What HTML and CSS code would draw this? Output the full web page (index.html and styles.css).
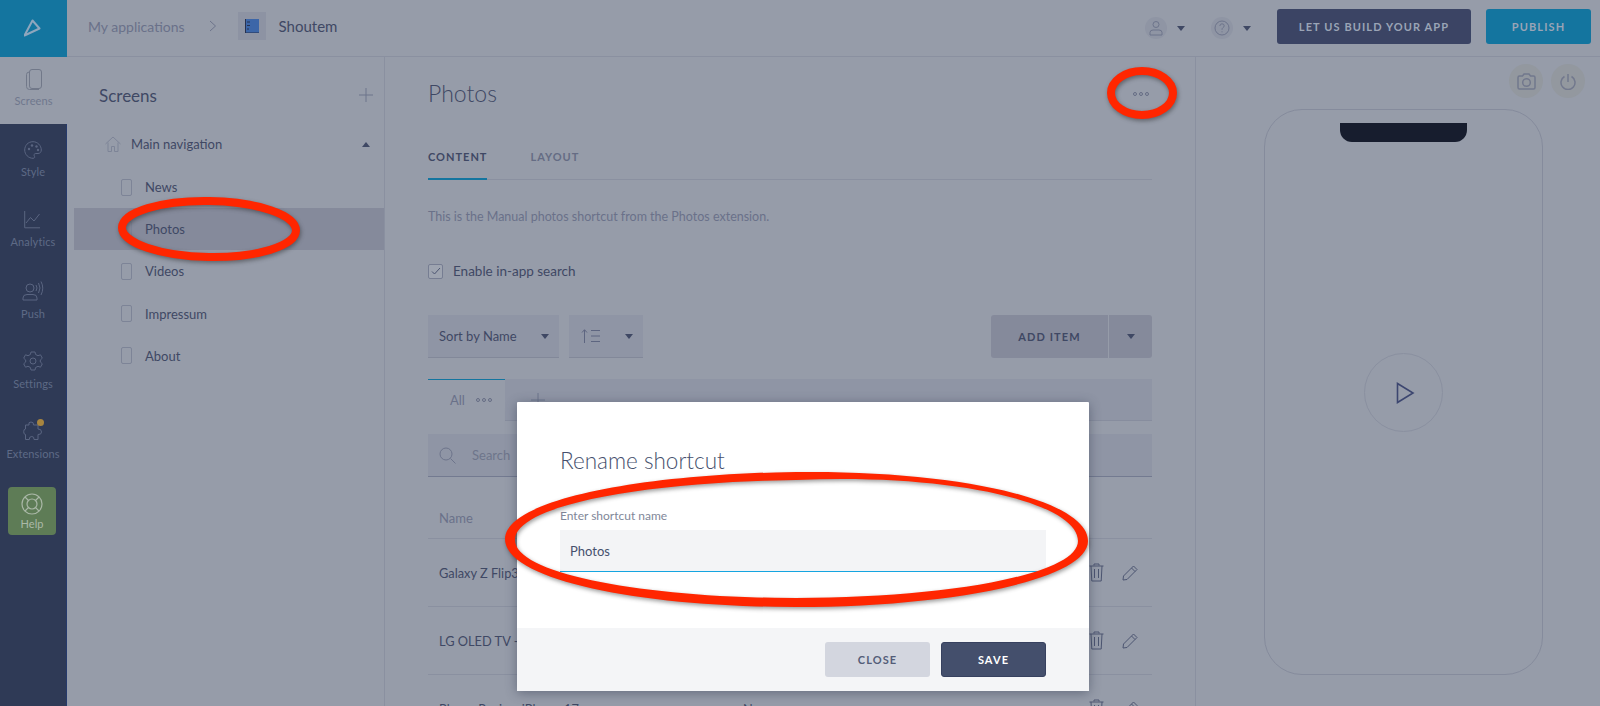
FILE: index.html
```html
<!DOCTYPE html>
<html lang="en">
<head>
  <meta charset="UTF-8">
  <title>Shoutem - Rename shortcut</title>
  <link rel="stylesheet" href="styles.css">
</head>
<body>
  <header class="topbar">
    <div class="logo">
      <svg width="20" height="20" viewBox="0 0 20 20"><path d="M8.500 1.500 L15.500 9.500 L0.500 16.500 Z" class="line-logo"/></svg>
    </div>
    <div class="crumb">My applications</div>
    <svg class="crumb-arrow" width="8" height="12" viewBox="0 0 8 12"><path d="M1 1 L6.500 6 L1 11" class="line-soft"/></svg>
    <div class="app-icon">
      <svg width="14" height="14" viewBox="0 0 14 14"><rect x="0" y="0" width="14" height="14" class="app-square"/><path d="M.5 0 V14 H14 M2 3 H5 M2 6.500 H5 M2 10 H4" class="app-ink"/></svg>
    </div>
    <div class="app-name">Shoutem</div>
    <div class="top-right">
      <div class="round-icon">
        <svg width="16" height="16" viewBox="0 0 16 16"><circle cx="8" cy="4.500" r="3" class="line-soft"/><path d="M2 15 V12.500 Q2 10 5 10 H11 Q14 10 14 12.500 V15 Z" class="line-soft"/></svg>
      </div>
      <span class="caret caret-user"></span>
      <div class="round-icon">
        <svg width="16" height="16" viewBox="0 0 16 16"><circle cx="8" cy="8" r="7" class="line-soft"/><path d="M5.800 6 Q6 3.800 8 3.800 Q10.200 3.800 10.200 5.800 Q10.200 7 8.800 7.800 Q8 8.300 8 9.800 M8 11.300 V12.300" class="line-soft"/></svg>
      </div>
      <span class="caret caret-help"></span>
      <button class="top-btn build-btn">LET US BUILD YOUR APP</button>
      <button class="top-btn publish-btn">PUBLISH</button>
    </div>
  </header>

  <div class="workspace">
    <nav class="rail">
      <div class="rail-item active">
        <svg width="16" height="22" viewBox="0 0 16 22"><rect x="3.500" y="0.500" width="12" height="19" rx="2.500" class="line-rail-dark"/><path d="M3.500 3 Q0.500 3 0.500 5.500 V17.500 Q0.500 20.500 3.500 20.500 H13" class="line-rail-dark"/></svg>
        <span>Screens</span>
      </div>
      <div class="rail-item">
        <svg width="18" height="18" viewBox="0 0 18 18"><path d="M9 .7 C4 .7 .7 4.500 .7 9 C.7 13.500 4.500 17.300 9 17.300 C11 17.300 11 15.800 10.300 15 C9.500 13.800 10.300 12.500 11.800 12.500 H14 C16 12.500 17.300 11 17.300 9 C17.300 4.500 13.500 .7 9 .7 Z" class="line-rail"/><circle cx="5" cy="8" r="1.200" class="dot-rail"/><circle cx="8" cy="4.500" r="1.200" class="dot-rail"/><circle cx="12.500" cy="5.500" r="1.200" class="dot-rail"/><circle cx="14" cy="9" r="1.200" class="dot-rail"/></svg>
        <span>Style</span>
      </div>
      <div class="rail-item">
        <svg width="18" height="18" viewBox="0 0 18 18"><path d="M.7 0 V16.800 H16 M2 12 L6.500 6.500 L10 10 L15.500 3" class="line-rail"/></svg>
        <span>Analytics</span>
      </div>
      <div class="rail-item">
        <svg width="22" height="20" viewBox="0 0 22 20"><circle cx="8" cy="7" r="4" class="line-rail"/><path d="M1 19 V17 Q1 13.500 5 13.500 H11 Q15 13.500 15 17 V19 Z M14 4 Q16 7 14 10 M16.500 2 Q19.500 7 16.500 12 M19 .5 Q22.500 7 19 14" class="line-rail"/></svg>
        <span>Push</span>
      </div>
      <div class="rail-item">
        <svg width="20" height="20" viewBox="0 0 20 20"><path d="M8 1 H12 L12.600 3.500 L15 4.700 L17.500 3.800 L19.300 7.200 L17.300 9 V11 L19.300 12.800 L17.500 16.200 L15 15.300 L12.600 16.500 L12 19 H8 L7.400 16.500 L5 15.300 L2.500 16.200 L.7 12.800 L2.700 11 V9 L.7 7.200 L2.500 3.800 L5 4.700 L7.400 3.500 Z" class="line-rail"/><circle cx="10" cy="10" r="3" class="line-rail"/></svg>
        <span>Settings</span>
      </div>
      <div class="rail-item">
        <span class="rail-dot"></span>
        <svg width="20" height="20" viewBox="0 0 20 20"><path d="M8 1 Q11 1 10.500 4 H15 V8 Q18.500 7.800 18.500 11 Q18.500 13.800 15 13.500 V18.500 H11 Q11.300 15.500 8.800 15.500 Q6 15.500 6.300 18.500 H2.500 V13.500 Q.7 13.500 .7 10.800 Q.7 8 2.500 8 V4 H6 Q5 1 8 1 Z" class="line-rail"/></svg>
        <span>Extensions</span>
      </div>
      <div class="help-box">
        <svg width="22" height="22" viewBox="0 0 22 22"><circle cx="11" cy="11" r="10" class="line-help"/><circle cx="11" cy="11" r="5" class="line-help"/><path d="M4 4 L7.500 7.500 M18 4 L14.500 7.500 M4 18 L7.500 14.500 M18 18 L14.500 14.500" class="line-help"/></svg>
        <span>Help</span>
      </div>
    </nav>

    <aside class="screens">
      <div class="screens-head">
        <h2>Screens</h2>
        <svg width="14" height="14" viewBox="0 0 14 14"><path d="M7 0 V14 M0 7 H14" class="line-soft"/></svg>
      </div>
      <div class="nav-root">
        <svg width="16" height="16" viewBox="0 0 16 16"><path d="M.5 8 L8 1 L15.500 8 M3 6.500 V15.500 H6.500 V10.500 H9.500 V15.500 H13 V6.500" class="line-faint"/></svg>
        <span>Main navigation</span>
        <span class="caret caret-up"></span>
      </div>
      <div class="screen-row"><span class="screen-mark"></span>News</div>
      <div class="screen-row selected"><span class="screen-mark"></span>Photos</div>
      <div class="screen-row"><span class="screen-mark"></span>Videos</div>
      <div class="screen-row"><span class="screen-mark"></span>Impressum</div>
      <div class="screen-row"><span class="screen-mark"></span>About</div>
    </aside>

    <main class="content">
      <div class="content-head">
        <h1>Photos</h1>
        <div class="dots"><i></i><i></i><i></i></div>
      </div>
      <div class="tabs">
        <div class="tab current">CONTENT</div>
        <div class="tab">LAYOUT</div>
      </div>
      <p class="note">This is the Manual photos shortcut from the Photos extension.</p>
      <label class="check-line">
        <span class="check-box">
          <svg width="10" height="8" viewBox="0 0 10 8"><path d="M1 4.500 L3.500 7 L9 1" class="line-dark"/></svg>
        </span>
        Enable in-app search
      </label>
      <div class="toolbar">
        <div class="select sort-name">Sort by Name<span class="caret"></span></div>
        <div class="select sort-dir">
          <svg width="20" height="14" viewBox="0 0 20 14"><path d="M3.500 14 V1 M1 3.500 L3.500 .7 L6 3.500 M10 1.500 H19 M10 7 H19 M10 12.500 H19" class="line-sort"/></svg>
          <span class="caret"></span>
        </div>
        <div class="add-group">
          <div class="add-btn">ADD ITEM</div>
          <div class="add-more"><span class="caret"></span></div>
        </div>
      </div>
      <div class="cat-strip">
        <div class="cat-tab">All<div class="dots small"><i></i><i></i><i></i></div></div>
        <svg class="cat-plus" width="14" height="14" viewBox="0 0 14 14"><path d="M7 0 V14 M0 7 H14" class="line-soft"/></svg>
      </div>
      <div class="search">
        <svg width="17" height="17" viewBox="0 0 17 17"><circle cx="7" cy="7" r="6" class="line-soft"/><path d="M11.500 11.500 L16.500 16.500" class="line-soft"/></svg>
        <span>Search</span>
      </div>
      <div class="table-head">Name</div>
      <div class="table-row">
        <span class="cell-name">Galaxy Z Flip3 Review</span>
        <svg class="trash" width="15" height="19" viewBox="0 0 15 19"><path d="M5 2.500 V1 H10 V2.500 M.5 3 H14.500 M2 3 L2.800 18 H12.200 L13 3 M5.500 6 V15 M9.500 6 V15" class="line-dark"/></svg>
        <svg class="pencil" width="16" height="16" viewBox="0 0 16 16"><path d="M11.500 1 L15 4.500 L5 14.500 L1 15 L1.500 11 Z M9.500 3 L13 6.500" class="line-dark"/></svg>
      </div>
      <div class="table-row">
        <span class="cell-name">LG OLED TV - Tested</span>
        <svg class="trash" width="15" height="19" viewBox="0 0 15 19"><path d="M5 2.500 V1 H10 V2.500 M.5 3 H14.500 M2 3 L2.800 18 H12.200 L13 3 M5.500 6 V15 M9.500 6 V15" class="line-dark"/></svg>
        <svg class="pencil" width="16" height="16" viewBox="0 0 16 16"><path d="M11.500 1 L15 4.500 L5 14.500 L1 15 L1.500 11 Z M9.500 3 L13 6.500" class="line-dark"/></svg>
      </div>
      <div class="table-row">
        <span class="cell-name">Phone Review iPhone 17</span>
        <span class="cell-type">N</span>
        <svg class="trash" width="15" height="19" viewBox="0 0 15 19"><path d="M5 2.500 V1 H10 V2.500 M.5 3 H14.500 M2 3 L2.800 18 H12.200 L13 3 M5.500 6 V15 M9.500 6 V15" class="line-dark"/></svg>
        <svg class="pencil" width="16" height="16" viewBox="0 0 16 16"><path d="M11.500 1 L15 4.500 L5 14.500 L1 15 L1.500 11 Z M9.500 3 L13 6.500" class="line-dark"/></svg>
      </div>
    </main>

    <section class="preview">
      <div class="preview-tools">
        <div class="tool-icon">
          <svg width="19" height="17" viewBox="0 0 19 17"><path d="M1 4.500 Q1 3 2.500 3 H5.500 L7 1 H12 L13.500 3 H16.500 Q18 3 18 4.500 V14.500 Q18 16 16.500 16 H2.500 Q1 16 1 14.500 Z" class="line-tool"/><circle cx="9.500" cy="9.500" r="3.800" class="line-tool"/></svg>
        </div>
        <div class="tool-icon">
          <svg width="16" height="17" viewBox="0 0 16 17"><path d="M8 1 V9 M4.500 3.500 A7 7 0 1 0 11.500 3.500" class="line-tool"/></svg>
        </div>
      </div>
      <div class="phone">
        <div class="notch"></div>
        <div class="play">
          <svg width="19" height="22" viewBox="0 0 19 22"><path d="M1.500 1.500 L17 11 L1.500 20.500 Z" class="line-play"/></svg>
        </div>
      </div>
    </section>
  </div>

  <div class="modal">
    <div class="modal-body">
      <h3>Rename shortcut</h3>
      <div class="field-label">Enter shortcut name</div>
      <div class="field">Photos</div>
    </div>
    <div class="modal-foot">
      <button class="modal-btn close-btn">CLOSE</button>
      <button class="modal-btn save-btn">SAVE</button>
    </div>
  </div>

  <!-- red marks drawn over the screenshot -->
  <svg class="marks" width="1600" height="706" viewBox="0 0 1600 706">
    <ellipse cx="209" cy="229" rx="87" ry="28" transform="rotate(1 209 229)" class="mark"/>
    <ellipse cx="1142" cy="93" rx="31" ry="22" class="mark"/>
    <path fill-rule="evenodd" d="M796 472 C960 470 1088 500 1088 541 C1088 580 950 607 796 607 C640 607 505 580 505 539 C505 500 640 474 796 472 Z M796 480 C950 473 1078 502 1078 541 C1078 575 945 598 796 598 C650 598 515 575 515 540 C515 505 645 482 796 480 Z" class="mark-fill"/>
  </svg>
</body>
</html>
```

FILE: styles.css
```css
:root {
  --bg: #969ca9;
  --line: #8a90a0;
  --dark: #3f4864;
  --soft: #6d748b;
  --navy: #2f3a56;
  --blue: #14759f;
}
* { box-sizing: border-box; }
html, body {
  height: 706px;
  overflow: hidden;
}
body {
  margin: 0;
  background: var(--bg);
  color: var(--dark);
  font-family: Lato, "Noto Sans", sans-serif;
  font-size: 14px;
  position: relative;
}
svg { display: block; flex: none; }
svg path, svg circle, svg rect { fill: none; stroke-width: 1; }
.line-logo { stroke: #8fa6bd; stroke-width: 2 !important; stroke-linejoin: round; }
.line-soft { stroke: #6d748b; }
.line-sort { stroke: #5d6580; }
.line-faint { stroke: #7d8497; }
.line-dark { stroke: #4c5571; }
.line-rail { stroke: #5a6581; }
.line-rail-dark { stroke: #717889; }
.line-tool { stroke: #72788d; stroke-width: 1.500 !important; }
.line-help { stroke: #a9b7a6; stroke-width: 1.200 !important; }
.line-play { stroke: #3c4670; stroke-width: 1.600 !important; }
svg .dot-rail { fill: #5a6581; }
svg .app-square { fill: #3c66a8; stroke: none; }
.app-ink { stroke: #27314f; }

.caret {
  display: inline-block;
  width: 0;
  height: 0;
  border-left: 4.500px solid transparent;
  border-right: 4.500px solid transparent;
  border-top: 5px solid var(--dark);
}
.caret-up {
  border-top: 0;
  border-bottom: 5px solid var(--dark);
  margin-left: auto;
}

/* top bar */
.topbar {
  height: 57px;
  padding-bottom: 4px;
  display: flex;
  align-items: center;
  border-bottom: 1px solid var(--line);
}
.logo {
  width: 67px;
  height: 57px;
  background: var(--blue);
  display: flex;
  align-items: center;
  justify-content: center;
  align-self: flex-start;
}
.crumb { margin-left: 21px; font-size: 14px; color: #6a7189; }
.crumb-arrow { margin-left: 24px; }
.app-icon {
  width: 28px;
  height: 28px;
  margin-left: 21px;
  background: #8d93a3;
  display: flex;
  align-items: center;
  justify-content: center;
}
.app-name { margin-left: 13px; font-size: 15px; color: var(--dark); }
.top-right {
  margin-left: auto;
  display: flex;
  align-items: center;
  padding-right: 9px;
}
.round-icon {
  width: 22px;
  height: 22px;
  margin-top: 4px;
  border-radius: 50%;
  background: #8f95a4;
  display: flex;
  align-items: center;
  justify-content: center;
}
.caret-user { margin: 4px 26.500px 0 9.500px; }
.caret-help { margin: 4px 26.500px 0 9.500px; }
.top-btn {
  height: 35px;
  border: 0;
  border-radius: 3px;
  font: bold 11px Lato, "Noto Sans", sans-serif;
  letter-spacing: 1.100px;
  color: #9aa4b6;
}
.build-btn { width: 194px; background: #3b4464; }
.publish-btn { width: 105px; margin-left: 15px; background: var(--blue); }

.workspace {
  display: flex;
  height: 649px;
  overflow: hidden;
}

/* left rail */
.rail {
  width: 67px;
  background: var(--navy);
  border-right: 1px solid #263a6c;
  display: flex;
  flex-direction: column;
  align-items: center;
  flex: none;
}
.rail-item {
  width: 100%;
  height: 70px;
  padding-top: 17px;
  display: flex;
  flex-direction: column;
  align-items: center;
  gap: 6px;
  font-size: 11px;
  letter-spacing: 0.100px;
  color: #5e6a86;
  position: relative;
}
.rail-item.active {
  height: 67px;
  background: var(--bg);
  color: #6f778d;
  padding-top: 12px;
  gap: 3px;
  margin-right: -1px;
  width: 67px;
}
.rail-dot {
  position: absolute;
  left: 37px;
  top: 15px;
  width: 7px;
  height: 7px;
  border-radius: 50%;
  background: #a8853f;
}
.help-box {
  width: 48px;
  height: 48px;
  margin: 13px 2px 0 0;
  background: #5e7c56;
  border-radius: 4px;
  display: flex;
  flex-direction: column;
  align-items: center;
  justify-content: center;
  gap: 2px;
  font-size: 11px;
  color: #abb9a8;
}

/* screens panel */
.screens {
  width: 318px;
  flex: none;
  padding-left: 7px;
  border-right: 1px solid var(--line);
}
.screens-head {
  height: 65px;
  padding: 11px 11px 0 25px;
  display: flex;
  align-items: center;
  justify-content: space-between;
}
.screens-head h2 { margin: 0; font-size: 17px; font-weight: 400; }
.nav-root {
  height: 44px;
  display: flex;
  align-items: center;
  padding: 0 14px 0 31px;
  gap: 10px;
  font-size: 13px;
}
.screen-row {
  height: 42.200px;
  padding-left: 47px;
  display: flex;
  align-items: center;
  gap: 13px;
  font-size: 13px;
}
.screen-row.selected { background: #858a9b; }
.screen-mark {
  width: 11px;
  height: 17px;
  border: 1px solid #7d8497;
  border-radius: 2px;
}

/* main column */
.content {
  width: 811px;
  flex: none;
  padding: 0 43px;
  border-right: 1px solid var(--line);
}
.content-head {
  height: 77px;
  padding-bottom: 6px;
  display: flex;
  align-items: center;
  justify-content: space-between;
}
.content-head h1 { margin: 0; font-size: 23px; font-weight: 300; }
.dots { display: flex; gap: 2px; margin: 2px 3px 0 0; }
.dots i {
  width: 4px;
  height: 4px;
  border: 1px solid #656c84;
  border-radius: 50%;
}
.dots.small { margin: 0 0 0 11px; }
.tabs {
  display: flex;
  gap: 43px;
  height: 46px;
  border-bottom: 1px solid var(--line);
}
.tab {
  padding-top: 16px;
  font-size: 11px;
  font-weight: 700;
  letter-spacing: 1px;
  color: #656c84;
}
.tab.current {
  color: var(--dark);
  height: 46px;
  border-bottom: 2px solid var(--blue);
}
.note { margin: 29px 0 0; font-size: 12.500px; color: #6a7189; line-height: 16px; }
.check-line {
  margin-top: 38px;
  display: flex;
  align-items: center;
  gap: 10px;
  font-size: 13.500px;
  height: 16px;
}
.check-box {
  width: 15px;
  height: 15px;
  border: 1px solid #767d92;
  border-radius: 2px;
  background: #9ea4b0;
  display: flex;
  align-items: center;
  justify-content: center;
}
.toolbar {
  margin-top: 36px;
  height: 43px;
  display: flex;
  gap: 10px;
}
.select {
  height: 43px;
  background: #8f95a5;
  border-bottom: 1px solid #828899;
  display: flex;
  align-items: center;
  justify-content: space-between;
  padding: 0 10px 0 11px;
  font-size: 13px;
}
.sort-name { width: 131px; }
.sort-dir { width: 74px; padding-left: 12px; }
.add-group {
  margin-left: auto;
  display: flex;
  height: 43px;
  background: #858a9b;
  border-radius: 3px;
}
.add-btn {
  width: 118px;
  border-right: 1px solid #969ca9;
  display: flex;
  align-items: center;
  justify-content: center;
  font-size: 11px;
  font-weight: 700;
  letter-spacing: 1.100px;
}
.add-more {
  width: 43px;
  display: flex;
  align-items: center;
  justify-content: center;
}
.cat-strip {
  margin-top: 21px;
  height: 42px;
  background: #8f95a5;
  border-bottom: 1px solid #878d9e;
  display: flex;
  align-items: center;
}
.cat-tab {
  width: 77px;
  height: 42px;
  background: var(--bg);
  border-top: 1px solid var(--blue);
  display: flex;
  align-items: center;
  padding-left: 22px;
  color: #6a7189;
  font-size: 13px;
}
.cat-plus { margin-left: 26px; }
.search {
  margin-top: 13px;
  height: 43px;
  background: #8f95a5;
  border-bottom: 1px solid #737a90;
  display: flex;
  align-items: center;
  gap: 16px;
  padding-left: 11px;
  color: #6e758b;
  font-size: 13px;
}
.table-head {
  height: 62px;
  border-bottom: 1px solid var(--line);
  padding: 33px 0 0 11px;
  font-size: 13px;
  color: #6a7189;
}
.table-row {
  height: 68px;
  border-bottom: 1px solid var(--line);
  display: flex;
  align-items: center;
  padding-left: 11px;
  position: relative;
  font-size: 12.800px;
}
.cell-type { position: absolute; left: 315px; }
.trash { margin-left: auto; }
.pencil { margin-left: 18px; margin-right: 14px; }

/* preview */
.preview {
  flex: 1;
  padding-top: 7px;
  display: flex;
  flex-direction: column;
  align-items: center;
}
.preview-tools {
  align-self: stretch;
  display: flex;
  justify-content: flex-end;
  gap: 8px;
  padding-right: 15px;
}
.tool-icon {
  width: 34px;
  height: 34px;
  border-radius: 50%;
  background: #93989f;
  display: flex;
  align-items: center;
  justify-content: center;
}
.phone {
  width: 279px;
  height: 566px;
  margin-top: 11px;
  margin-left: 11px;
  border: 1px solid #858b9c;
  border-radius: 38px;
  display: flex;
  flex-direction: column;
  align-items: center;
}
.notch {
  width: 127px;
  height: 19px;
  margin-top: 13px;
  background: #171d2e;
  border-radius: 0 0 12px 12px;
}
.play {
  width: 79px;
  height: 79px;
  margin-top: 211px;
  border: 1px solid #8a90a0;
  border-radius: 50%;
  display: flex;
  align-items: center;
  justify-content: center;
  padding-left: 4px;
}

/* rename dialog */
.modal {
  position: absolute;
  left: 517px;
  top: 402px;
  width: 572px;
  height: 289px;
  background: #fff;
  box-shadow: 0 2px 12px rgba(40, 48, 70, 0.45);
  border-radius: 1px;
  display: flex;
  flex-direction: column;
  color: #46506d;
}
.modal-body { flex: 1; padding: 45px 43px 0; }
.modal-body h3 { margin: 0; font-size: 22.500px; font-weight: 300; line-height: 28px; }
.field-label { margin-top: 33px; font-size: 12px; color: #818799; line-height: 16px; }
.field {
  margin-top: 6px;
  height: 42px;
  background: #f3f4f6;
  border-bottom: 1px solid #15a5e0;
  padding: 0 10px;
  display: flex;
  align-items: center;
  font-size: 13px;
}
.modal-foot {
  height: 63px;
  background: #f4f5f7;
  display: flex;
  justify-content: flex-end;
  align-items: flex-start;
  gap: 11px;
  padding: 14px 43px 0 0;
}
.modal-btn {
  width: 105px;
  height: 35px;
  border: 0;
  border-radius: 3px;
  font: bold 11px Lato, "Noto Sans", sans-serif;
  letter-spacing: 1.100px;
}
.close-btn { background: #d3d6df; color: #545d78; }
.save-btn { background: #444f6c; color: #fff; border: 1px solid #37415f; }

/* red marks */
.marks {
  position: absolute;
  left: 0;
  top: 0;
  filter: drop-shadow(1px 2px 2px rgba(30, 30, 30, 0.45));
}
.marks .mark { fill: none; stroke: #ff2600; stroke-width: 8; }
.marks .mark-fill { fill: #ff2600; stroke: none; }
```
